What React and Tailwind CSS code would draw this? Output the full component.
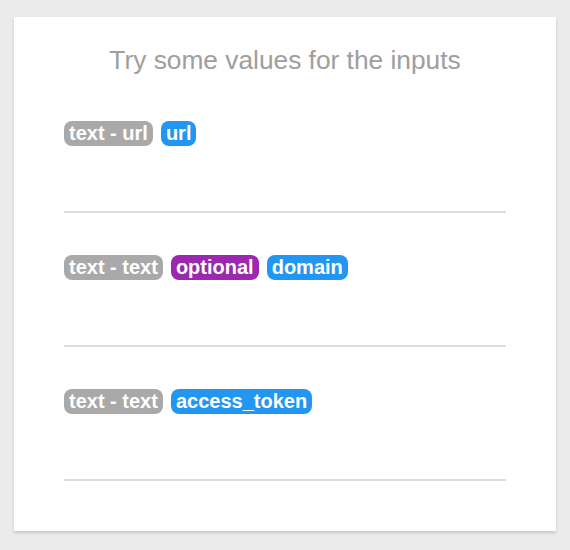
import React from 'react';

const fields = [
  { badges: [{ label: 'text - url', color: 'bg-[#a9a9a9]' }, { label: 'url', color: 'bg-[#2196f3]' }] },
  {
    badges: [
      { label: 'text - text', color: 'bg-[#a9a9a9]' },
      { label: 'optional', color: 'bg-[#9c27b0]' },
      { label: 'domain', color: 'bg-[#2196f3]' },
    ],
  },
  { badges: [{ label: 'text - text', color: 'bg-[#a9a9a9]' }, { label: 'access_token', color: 'bg-[#2196f3]' }] },
];

const Badge = ({ label, color }) => (
  <span className={`${color} text-white font-bold text-[20px] leading-[25px] h-[25px] px-[5px] rounded-[8px]`}>
    {label}
  </span>
);

export default function App() {
  return (
    <div
      className="min-h-[550px] bg-[#ebebeb] pt-[17px] px-[14px] pb-[19px]"
      style={{ fontFamily: '"Liberation Sans", Arial, sans-serif' }}
    >
      <div className="bg-white shadow-[0_2px_3px_rgba(0,0,0,0.15)] px-[50px] pt-[27px] pb-[50px]">
        <h1 className="text-center text-[26.3px] leading-[32px] text-[#9e9e9e] mb-[45px]">
          Try some values for the inputs
        </h1>
        <div className="flex flex-col gap-[42px]">
          {fields.map((f, i) => (
            <div key={i}>
              <div className="flex gap-[8px]">
                {f.badges.map((b) => (
                  <Badge key={b.label} {...b} />
                ))}
              </div>
              <input
                type="text"
                className="block w-full h-[67px] bg-transparent outline-none border-b-2 border-[#dcdcdc]"
              />
            </div>
          ))}
        </div>
      </div>
    </div>
  );
}
